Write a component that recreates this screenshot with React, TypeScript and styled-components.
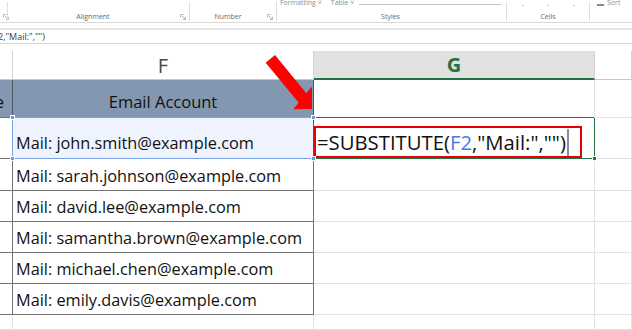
import React from 'react';
import styled, { createGlobalStyle } from 'styled-components';

const Global = createGlobalStyle`
  *, *::before, *::after { box-sizing: border-box; }
  html, body { margin: 0; padding: 0; background: #fff; }
  body { font-family: "Open Sans", "Liberation Sans", sans-serif; }
`;

const Screen = styled.div`
  position: relative;
  width: 632px;
  height: 330px;
  overflow: hidden;
  background: #fff;
`;

/* ---------- Ribbon ---------- */
const Ribbon = styled.div`
  display: flex;
  height: 23px;
  border-bottom: 1px solid #d9d9d9;
  overflow: hidden;
  font-size: 7px;
  color: #6a6a6a;
`;

const Group = styled.div<{ $w?: number }>`
  flex: ${p => (p.$w ? `0 0 ${p.$w}px` : '1 1 auto')};
  display: flex;
  flex-direction: column;
  min-width: 0;
`;

const Sep = styled.div`
  flex: 0 0 1px;
  margin: 2px 0 1px;
  background: #dedede;
`;

const GroupTop = styled.div<{ $pad?: number }>`
  height: 12px;
  margin-top: -2px;
  display: flex;
  align-items: flex-start;
  padding: 0 4px 0 ${p => p.$pad ?? 3}px;
  line-height: 10px;
  color: #8d8d8d;
  white-space: nowrap;
  overflow: hidden;
`;

const TopText = styled.span<{ $ml?: number }>`
  margin-left: ${p => p.$ml ?? 0}px;
`;

const GalleryEdge = styled.div`
  flex: 1;
  margin: 6px 0 0 5px;
  height: 1px;
  background: #c4c4c4;
`;

const Dot = styled.span<{ $ml: number }>`
  width: 2px;
  height: 1px;
  margin: 7px 0 0 ${p => p.$ml}px;
  background: #c9c9c9;
`;

const MiniIcon = styled.span`
  width: 7px;
  height: 2px;
  margin-top: 6px;
  background: #8a8a8a;
`;

const LabelRow = styled.div<{ $shift?: number }>`
  flex: 1;
  display: grid;
  grid-template-columns: 1fr auto 1fr;
  align-items: center;
  padding: 1px 3px 0;
`;

const GroupLabel = styled.span<{ $shift?: number }>`
  grid-column: 2;
  margin-right: ${p => p.$shift ?? 0}px;
  line-height: 10px;
  white-space: nowrap;
`;

const LauncherBox = styled.span`
  grid-column: 3;
  justify-self: end;
  display: flex;
`;

const Launcher = () => (
  <LauncherBox>
    <svg width="6" height="6" viewBox="0 0 6 6" fill="none" stroke="#a3a3a3" strokeWidth="0.8">
      <path d="M0.5 3.5V0.5H3.5" />
      <path d="M2 2L5.3 5.3M5.4 2.8V5.4H2.8" />
    </svg>
  </LauncherBox>
);

/* ---------- Formula bar ---------- */
const FormulaBar = styled.div`
  margin: 5px 0 7px;
  height: 16px;
  border-top: 2px solid #e6e6e6;
  border-bottom: 1px solid #d6d6d6;
  font-size: 9px;
  line-height: 13px;
  color: #3a3a3a;
  white-space: nowrap;
  overflow: hidden;
`;

const FormulaTail = styled.span`
  margin-left: -2px;
`;

/* ---------- Sheet ---------- */
const Sheet = styled.div`
  display: grid;
  grid-template-columns: 13px 301px 281px 1fr;
  grid-template-rows: 29px 38px 41px 32px 31px 31px 31px 31px 1fr;
  height: 279px;
  color: #111;
`;

const HeaderCell = styled.div<{ $active?: boolean }>`
  display: flex;
  align-items: center;
  justify-content: center;
  background: ${p => (p.$active ? '#e1e1e1' : '#fff')};
  color: ${p => (p.$active ? '#217346' : '#4a4a4a')};
  font-weight: ${p => (p.$active ? 700 : 400)};
  font-size: 20px;
  border-right: 1px solid #d4d4d4;
  border-bottom: ${p => (p.$active ? '2px solid #217346' : '1px solid #c9c9c9')};
`;

const TitleCell = styled.div<{ $clip?: boolean }>`
  display: flex;
  align-items: flex-end;
  justify-content: ${p => (p.$clip ? 'flex-end' : 'center')};
  background: #8497b0;
  border-right: 1px solid #505866;
  border-bottom: 1px solid #6b7482;
  font-size: 16.5px;
  line-height: 22px;
  padding: 0 ${p => (p.$clip ? 8 : 0)}px 4px 0;
  white-space: nowrap;
  overflow: hidden;
`;

const DataCell = styled.div<{ $table?: boolean }>`
  display: flex;
  align-items: flex-end;
  padding: 0 0 3px 3px;
  font-size: 16.3px;
  line-height: 22px;
  white-space: nowrap;
  overflow: hidden;
  border-right: 1px solid ${p => (p.$table ? '#737373' : '#e1e1e1')};
  border-bottom: 1px solid ${p => (p.$table ? '#737373' : '#e1e1e1')};
`;

const SelectedCell = styled(DataCell)`
  position: relative;
  overflow: visible;
  background: #eef3fd;
  border-right-color: #7ba1e4;
  border-bottom-color: #7ba1e4;
  box-shadow: -1px -1px 0 0 #7ba1e4;
  padding-bottom: 4px;
`;

const ActiveCell = styled.div`
  position: relative;
  display: flex;
  align-items: flex-end;
  border-right: 1px solid #217346;
  border-bottom: 1px solid #217346;
  box-shadow: -1px -1px 0 0 #217346;
`;

const Handle = styled.span<{ $v: 'top' | 'bottom'; $h: 'left' | 'right'; $color: string }>`
  position: absolute;
  width: 5px;
  height: 5px;
  background: ${p => p.$color};
  border: 1px solid #fff;
  ${p => p.$v}: ${p => (p.$v === 'top' ? -3 : -3)}px;
  ${p => p.$h}: ${p => (p.$h === 'left' ? -3 : -3)}px;
  z-index: 2;
`;

const FormulaEdit = styled.div`
  width: 268px;
  height: 32px;
  border: 2px solid #e60000;
  display: flex;
  align-items: center;
  padding-left: 1px;
  font-size: 20.3px;
  line-height: 28px;
  color: #111;
  white-space: nowrap;
`;

const Ref = styled.span`
  color: #4b7bdb;
`;

const Caret = styled.span`
  display: inline-block;
  width: 2px;
  height: 27px;
  margin-left: 1px;
  background: #8c8c8c;
`;

const Arrow = styled.svg`
  position: absolute;
  left: 255px;
  top: 50px;
  z-index: 3;
`;

const emails = [
  'sarah.johnson',
  'david.lee',
  'samantha.brown',
  'michael.chen',
  'emily.davis',
];

export default function App() {
  return (
    <Screen>
      <Global />
      <Ribbon>
        <Group $w={7}>
          <GroupTop />
          <LabelRow>
            <Launcher />
          </LabelRow>
        </Group>
        <Sep />
        <Group $w={181}>
          <GroupTop />
          <LabelRow>
            <GroupLabel $shift={11}>Alignment</GroupLabel>
            <Launcher />
          </LabelRow>
        </Group>
        <Sep />
        <Group $w={86}>
          <GroupTop />
          <LabelRow>
            <GroupLabel $shift={10}>Number</GroupLabel>
            <Launcher />
          </LabelRow>
        </Group>
        <Sep />
        <Group $w={229}>
          <GroupTop>
            <TopText>Formatting ˅</TopText>
            <TopText $ml={9}>Table ˅</TopText>
            <GalleryEdge />
          </GroupTop>
          <LabelRow>
            <GroupLabel $shift={2}>Styles</GroupLabel>
          </LabelRow>
        </Group>
        <Sep />
        <Group $w={82}>
          <GroupTop $pad={0}>
            <Dot $ml={15} />
            <Dot $ml={23} />
            <Dot $ml={24} />
          </GroupTop>
          <LabelRow>
            <GroupLabel>Cells</GroupLabel>
          </LabelRow>
        </Group>
        <Sep />
        <Group>
          <GroupTop $pad={7}>
            <MiniIcon />
            <TopText $ml={3}>Sort</TopText>
          </GroupTop>
          <LabelRow />
        </Group>
      </Ribbon>

      <FormulaBar>
        <FormulaTail>2,"Mail:","")</FormulaTail>
      </FormulaBar>

      <Sheet>
        <HeaderCell />
        <HeaderCell>F</HeaderCell>
        <HeaderCell $active>G</HeaderCell>
        <HeaderCell />

        <TitleCell $clip>Full Name</TitleCell>
        <TitleCell>Email Account</TitleCell>
        <DataCell />
        <DataCell />

        <DataCell $table />
        <SelectedCell $table>
          Mail: john.smith@example.com
          <Handle $v="top" $h="left" $color="#6f97e0" />
          <Handle $v="top" $h="right" $color="#6f97e0" />
          <Handle $v="bottom" $h="left" $color="#6f97e0" />
          <Handle $v="bottom" $h="right" $color="#6f97e0" />
        </SelectedCell>
        <ActiveCell>
          <FormulaEdit>
            =SUBSTITUTE(<Ref>F2</Ref>,"Mail:","")<Caret />
          </FormulaEdit>
          <Handle $v="bottom" $h="right" $color="#217346" />
        </ActiveCell>
        <DataCell />

        {emails.map(e => (
          <React.Fragment key={e}>
            <DataCell $table />
            <DataCell $table>Mail: {e}@example.com</DataCell>
            <DataCell />
            <DataCell />
          </React.Fragment>
        ))}

        <DataCell />
        <DataCell />
        <DataCell />
        <DataCell />
      </Sheet>

      <Arrow width="57" height="65" viewBox="0 0 57 65">
        <polygon
          points="20,5 51.3,43.3 56.7,36.7 60,59 38.3,59.3 43.7,52.7 10.7,12.7"
          fill="#ff0000"
        />
      </Arrow>
    </Screen>
  );
}
